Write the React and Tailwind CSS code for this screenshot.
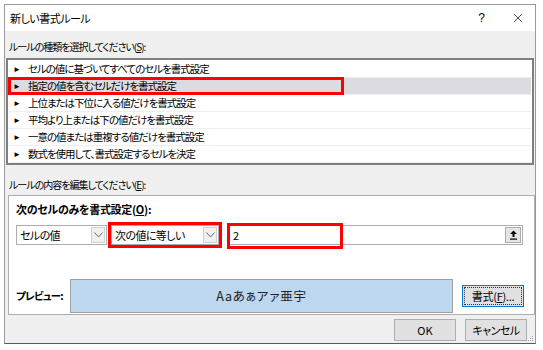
import { X } from 'lucide-react';

const font = { fontFamily: '"Noto Sans CJK JP", "Noto Sans", sans-serif' };

const rules = [
    'セルの値に基づいてすべてのセルを書式設定',
    '指定の値を含むセルだけを書式設定',
    '上位または下位に入る値だけを書式設定',
    '平均より上または下の値だけを書式設定',
    '一意の値または重複する値だけを書式設定',
    '数式を使用して、書式設定するセルを決定',
];

const Chevron = () => (
    <svg width="9" height="6" viewBox="0 0 9 6" fill="none">
        <path d="M0.5 0.5 L4.5 5 L8.5 0.5" stroke="#6d6d6d" strokeWidth="1" />
    </svg>
);

const Dropdown = ({ label, className }) => (
    <div className={`flex h-[20px] items-center border border-[#adadad] bg-white ${className}`}>
        <span className="flex-1 whitespace-nowrap pl-[3px] text-[11px] leading-none tracking-[-0.6px] text-black">{label}</span>
        <div className="mr-[1px] flex h-[16px] w-[14px] items-center justify-center border border-[#d0d0d0] bg-[#f0f0f0]">
            <Chevron />
        </div>
    </div>
);

export default function App() {
    return (
        <div className="h-[350px] w-[543px] bg-white pl-[4px] pt-[4px] [font-feature-settings:'palt']" style={font}>
            <div className="flex h-[340px] w-[532px] flex-col border border-[#9a9a9a] border-b-[#5a5a5a] bg-[#f0f0f0]">
                {/* Title bar */}
                <div className="flex h-[26px] items-center bg-white pl-[5px] pr-[10px]">
                    <span className="flex-1 text-[11px] tracking-[-0.5px] text-black">新しい書式ルール</span>
                    <span className="mr-[26px] text-[12px] text-black" style={{ fontFamily: '"Liberation Sans", sans-serif' }}>?</span>
                    <X className="h-[14px] w-[14px] text-black" strokeWidth={1.2} />
                </div>

                {/* Rule type */}
                <div className="pl-[4px] pt-[9px] text-[10px] leading-[14px] tracking-[-1px] text-black">
                    ルールの種類を選択してください(<span className="underline">S</span>):
                </div>
                <div className="relative ml-[1px] mt-[4px] h-[107px] w-[528px] border-2 border-[#7f7f7f] bg-white p-[1px]">
                    {rules.map((r, i) => (
                        <div
                            key={r}
                            className={`flex h-[17px] items-center border-b border-[#eeeeee] pl-[4px] text-[10.5px] tracking-[-1px] text-black ${i === 1 ? 'bg-[#dcdce0]' : ''}`}
                        >
                            <span className="mr-[7px] text-[8px] leading-none tracking-normal">►</span>
                            {r}
                        </div>
                    ))}
                    <div className="absolute left-[0px] top-[17px] h-[18px] w-[336px] border-[3px] border-[#ff0000]" />
                </div>

                {/* Rule content */}
                <div className="pl-[4px] pt-[13px] text-[10px] leading-[14px] tracking-[-1px] text-black">
                    ルールの内容を編集してください(<span className="underline">E</span>):
                </div>
                <div className="ml-[3px] mt-[3px] h-[120px] w-[527px] border border-[#adadad] bg-white px-[7px]">
                    <div className="pt-[6px] text-[11px] font-bold leading-[14px] tracking-[-0.3px] text-black">
                        次のセルのみを書式設定(<span className="underline">O</span>):
                    </div>
                    <div className="mt-[6px] flex items-center">
                        <Dropdown label="セルの値" className="w-[91px]" />
                        <div className="ml-[1px] border-[3px] border-[#ff0000] p-0">
                            <Dropdown label="次の値に等しい" className="w-[108px]" />
                        </div>
                        <div className="relative ml-[6px] flex h-[20px] w-[295px] items-center border border-[#adadad] bg-white">
                            <span className="pl-[4px] text-[11px] leading-none text-black">2</span>
                            <div className="ml-auto mr-[1px] flex h-[16px] w-[16px] items-center justify-center border border-[#adadad] bg-[#e5e5e5]">
                                <svg width="9" height="10" viewBox="0 0 9 10">
                                    <path d="M4.5 0.5 L8 4 L5.5 4 L5.5 7 L3.5 7 L3.5 4 L1 4 Z" fill="#000" />
                                    <rect x="1" y="8.5" width="7" height="1.2" fill="#000" />
                                </svg>
                            </div>
                            <div className="absolute -left-[2px] -top-[3px] h-[26px] w-[116px] border-[3px] border-[#ff0000]" />
                        </div>
                    </div>
                    <div className="mt-[31px] flex items-center">
                        <span className="w-[54px] whitespace-nowrap text-[10.5px] font-bold tracking-[-0.8px] text-black">プレビュー:</span>
                        <div className="flex h-[34px] w-[383px] items-center justify-center border border-[#a0a0a0] bg-[#bdd7ee]">
                            <span className="text-[12.5px] tracking-[0.8px] text-[#222]">Aaあぁアァ亜宇</span>
                        </div>
                        <div className="ml-[9px] flex h-[22px] w-[62px] items-center justify-center border border-[#0078d7] bg-[#e1e1e1] p-[1px]">
                            <div className="flex h-full w-full items-center justify-center border border-dotted border-[#333] text-[11px] tracking-[-0.3px] text-black">
                                書式(<span className="underline">F</span>)...
                            </div>
                        </div>
                    </div>
                </div>

                {/* Footer */}
                <div className="relative flex flex-1 items-start justify-end gap-[9px] pr-[8px] pt-[4px]">
                    <button className="flex h-[22px] w-[62px] items-center justify-center border border-[#adadad] bg-[#e1e1e1] text-[11px] text-black">
                        OK
                    </button>
                    <button className="flex h-[22px] w-[62px] items-center justify-center border border-[#adadad] bg-[#e1e1e1] text-[11px] tracking-[-0.5px] text-black">
                        キャンセル
                    </button>
                    <div className="absolute bottom-[2px] right-[2px] grid grid-cols-3 gap-[1px]">
                        {[0, 0, 1, 0, 1, 1, 1, 1, 1].map((v, i) => (
                            <div key={i} className={`h-[1px] w-[1px] ${v ? 'bg-[#a0a0a0]' : ''}`} />
                        ))}
                    </div>
                </div>
            </div>
        </div>
    );
}
